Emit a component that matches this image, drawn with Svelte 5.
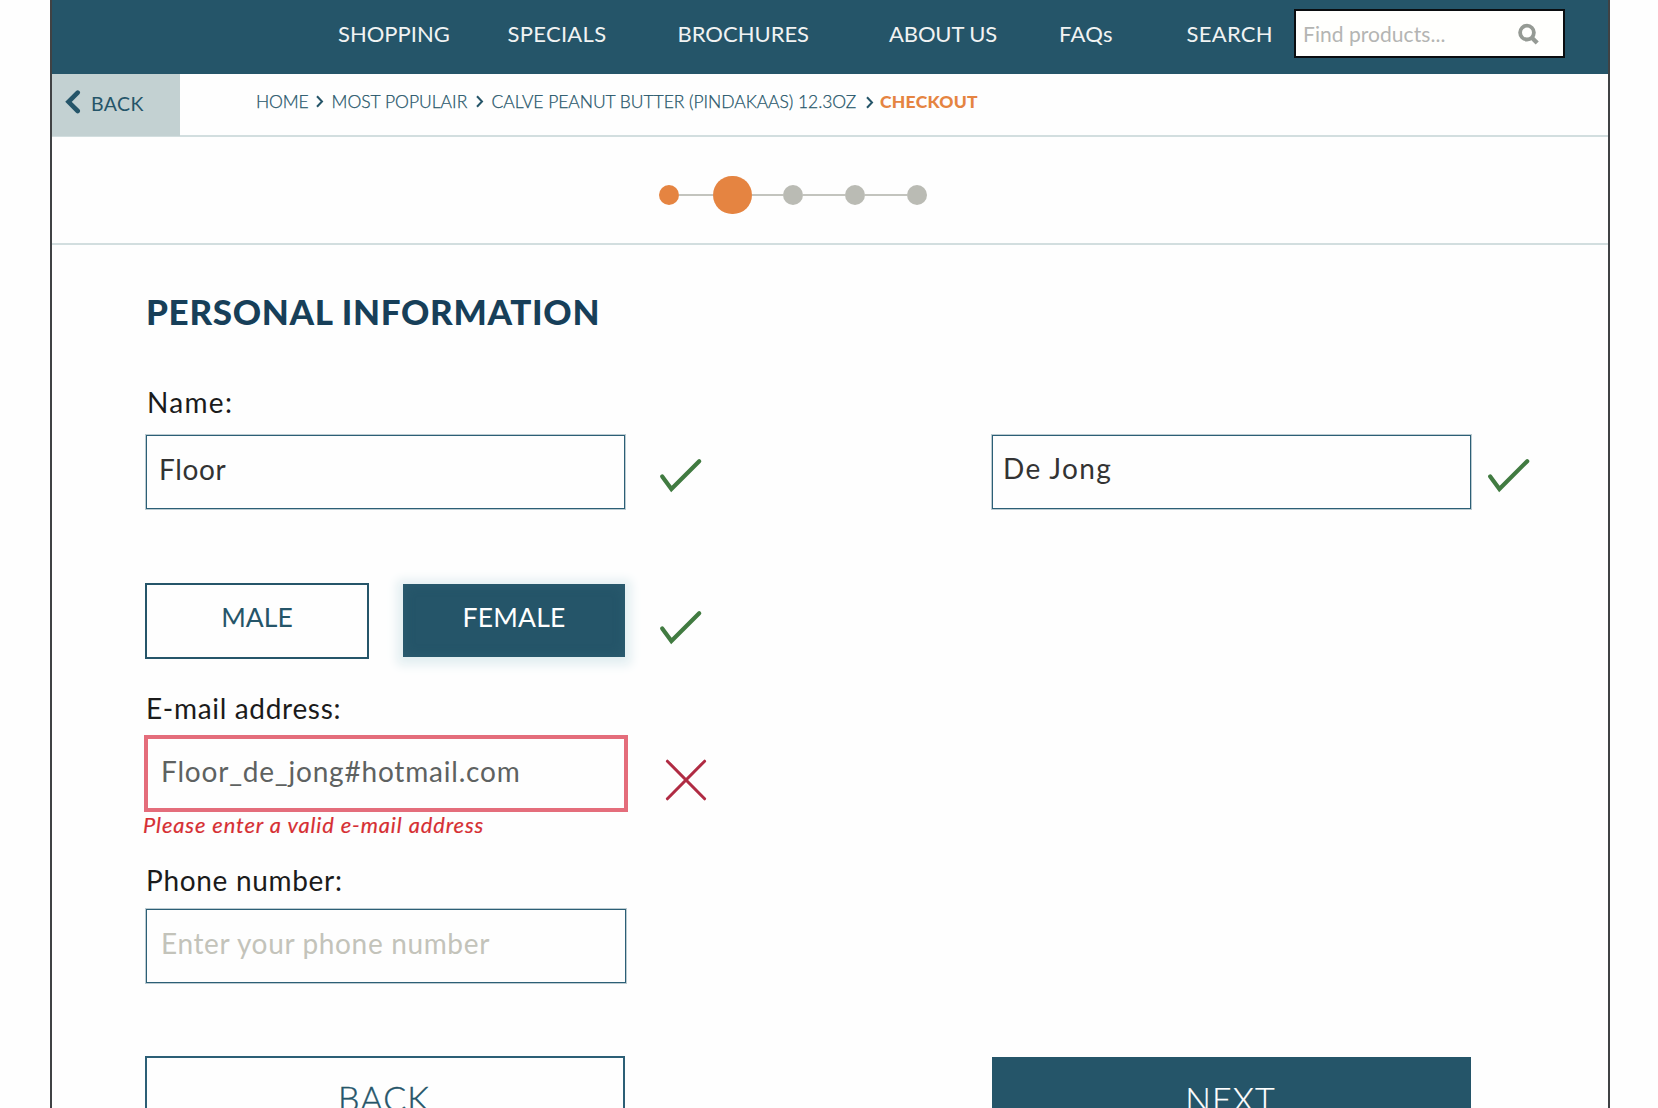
<script>
  const nav = [
    { label: 'SHOPPING', cls: '' },
    { label: 'SPECIALS', cls: 'loose' },
    { label: 'BROCHURES', cls: '' },
    { label: 'ABOUT US', cls: 'tight' },
    { label: 'FAQs', cls: 'loose' },
    { label: 'SEARCH', cls: 'loose' }
  ];
  const steps = ['done', 'current', 'todo', 'todo', 'todo'];
  let first = $state('Floor');
  let last = $state('De Jong');
  let email = $state('Floor_de_jong#hotmail.com');
  let phone = $state('');
</script>

{#snippet check()}
  <svg class="check" width="44" height="36" viewBox="0 0 44 36" aria-hidden="true">
    <path d="M3.2 18.4 L12.4 31 L40.2 3.2" />
  </svg>
{/snippet}

{#snippet arrow()}
  <svg class="arrow" width="9" height="13" viewBox="0 0 9 13" aria-hidden="true">
    <path d="M2 1.3 L7 6.5 L2 11.7" />
  </svg>
{/snippet}

<div class="page">
  <header>
    {#each nav as item}
      <a class={item.cls}>{item.label}</a>
    {/each}
    <div class="search">
      <input placeholder="Find products..." />
      <svg width="24" height="24" viewBox="0 0 24 24" aria-hidden="true">
        <circle cx="10" cy="9.6" r="6.9" />
        <path d="M14.9 14.8 L20.2 20" />
      </svg>
    </div>
  </header>

  <div class="bar">
    <button class="back">
      <svg width="16" height="24" viewBox="0 0 16 24" aria-hidden="true"><path d="M12.7 2.6 L3.5 11.8 L12.7 21" /></svg>
      <span>BACK</span>
    </button>
    <nav class="crumbs">
      <span class="home">HOME</span>
      {@render arrow()}
      <span class="popular">MOST POPULAIR</span>
      {@render arrow()}
      <span class="product">CALVE PEANUT BUTTER (PINDAKAAS) 12.3OZ</span>
      <span class="last">{@render arrow()}</span>
      <strong>CHECKOUT</strong>
    </nav>
  </div>

  <div class="steps">
    {#each steps as step, i}
      {#if i > 0}<i class={i === 1 ? 'first' : i === 2 ? 'second' : ''}></i>{/if}
      <b class={step}></b>
    {/each}
  </div>

  <main>
    <h1>PERSONAL INFORMATION</h1>

    <label class="name" for="first">Name:</label>
    <div class="row names">
      <input id="first" class="field first-name" bind:value={first} />
      {@render check()}
      <input class="field last-name" bind:value={last} />
      {@render check()}
    </div>

    <div class="row gender">
      <button class="male">MALE</button>
      <button class="female">FEMALE</button>
      {@render check()}
    </div>

    <label class="mail-label" for="mail">E-mail address:</label>
    <div class="row mail">
      <input id="mail" class="field invalid" bind:value={email} />
      <svg class="cross" width="44" height="44" viewBox="0 0 44 44" aria-hidden="true">
        <path d="M3.4 3.2 L40.6 40.8 M40.6 3.2 L3.4 40.8" />
      </svg>
    </div>
    <p class="error">Please enter a valid e-mail address</p>

    <label class="phone-label" for="phone">Phone number:</label>
    <div class="row phone">
      <input id="phone" class="field" placeholder="Enter your phone number" bind:value={phone} />
    </div>

    <div class="row actions">
      <button class="prev">BACK</button>
      <button class="next">NEXT</button>
    </div>
  </main>
</div>

<style>
  :global(body) { background: #fefefe; overflow: hidden; }
  * { box-sizing: border-box; }
  .page {
    width: 1560px;
    height: 1108px;
    margin-left: 50px;
    overflow: hidden;
    border-left: 2px solid #404244;
    border-right: 2px solid #404244;
    background: #fefefe;
    font-family: Lato, 'Open Sans', sans-serif;
    color: #1b1b1b;
  }
  svg { fill: none; display: block; flex: none; }
  button, input { font-family: inherit; margin: 0; border-radius: 0; outline: none; }
  button { border: 0; padding: 0; }

  header {
    display: grid;
    grid-template-columns: 169.5px 170px 211.5px 170px 127.5px 107.5px 271px;
    align-items: center;
    height: 74px;
    padding: 0 0 8px 286px;
    background: #255569;
    color: #f1f3f3;
    font-size: 22px;
    white-space: nowrap;
  }
  header a { line-height: 26px; padding-top: 2px; }
  .loose { letter-spacing: 0.3px; }
  .tight { letter-spacing: -0.12px; }
  .search {
    display: flex;
    align-items: center;
    width: 271px;
    height: 49px;
    border: 2px solid #0a0d10;
    background: #fffffd;
  }
  .search input {
    flex: 1;
    min-width: 0;
    height: 40px;
    padding: 1px 0 0 7px;
    border: 0;
    background: none;
    font-size: 21px;
    letter-spacing: 0.05px;
  }
  .search input::placeholder { color: #b4b5b3; opacity: 1; }
  .search svg { margin: 4px 22px 0 0; stroke: #959a94; stroke-width: 3.8; }
  .search path { stroke-width: 4.4; }

  .bar { display: flex; height: 63px; border-bottom: 2px solid #d2dedf; }
  .back {
    display: flex;
    align-items: center;
    width: 128px;
    height: 62px;
    padding: 0 0 6px 13px;
    background: #c3d1d2;
    color: #255569;
    font-size: 19.5px;
    letter-spacing: 0.4px;
  }
  .back svg { stroke: #255569; stroke-width: 4.6; stroke-linecap: round; stroke-linejoin: miter; }
  .back span { margin: 3px 0 0 10px; line-height: 24px; }

  .crumbs {
    display: flex;
    align-items: center;
    height: 54px;
    padding-left: 76px;
    color: #255569;
    font-size: 17.5px;
    font-weight: 300;
    white-space: nowrap;
    -webkit-text-stroke: 0.25px #255569;
  }
  .home { width: 59px; letter-spacing: -0.15px; }
  .popular { width: 135px; margin-left: 7.5px; }
  .product { width: 366px; margin-left: 8px; letter-spacing: -0.05px; }
  .arrow { stroke: #255569; stroke-width: 2; }
  .popular + .arrow { margin-left: 8px; }
  .last { margin: 3px 0 0 7.5px; }
  .crumbs strong {
    margin-left: 6px;
    color: #e58441;
    font-weight: 900;
    letter-spacing: 0.26px;
    -webkit-text-stroke: 0;
  }

  .steps {
    display: flex;
    align-items: center;
    height: 108px;
    padding: 10px 0 0 606.6px;
    border-bottom: 2px solid #d2dedf;
  }
  .steps b { width: 20.4px; height: 20.4px; border-radius: 50%; background: #babbb4; }
  .steps .done { background: #e58441; }
  .steps .current { width: 38.4px; height: 38.4px; background: #e58441; }
  .steps i { width: 41.7px; height: 2px; background: #c3c4be; }
  .steps .first { width: 34.4px; }
  .steps .second { width: 31px; }

  main { padding: 45px 0 0 93px; }
  h1 {
    margin: 0;
    padding-left: 1px;
    color: #173f59;
    font-size: 35px;
    font-weight: 900;
    line-height: 42px;
    letter-spacing: 0.68px;
  }
  label { display: block; height: 34px; padding-left: 1px; font-size: 28px; line-height: 34px; letter-spacing: 0.68px; }
  .name { margin-top: 53px; padding-left: 2px; letter-spacing: 1.3px; }
  .row { display: flex; }
  .field {
    width: 479px;
    height: 74px;
    padding: 0 12px 7px 12px;
    border: 1px solid #2c5f76;
    box-shadow: 0 0 0 1px rgba(37, 85, 105, 0.3);
    background: #fefefe;
    color: #333;
    font-size: 28px;
    letter-spacing: 0.65px;
  }
  .check { margin: 0; stroke: #417b41; stroke-width: 4.2; stroke-linecap: round; }
  .names { margin: 16px 0 0 1px; }
  .names .check { margin: 23px 0 0 34px; }
  .last-name { margin-left: 289px; padding: 0 12px 8px 10px; letter-spacing: 1.35px; }
  .names .last-name + .check { margin-left: 16px; }

  .gender { margin-top: 74px; height: 76px; }
  .gender button { font-size: 26.5px; }
  .male { width: 224px; height: 76px; padding: 0 0 9px; border: 2px solid #255569; background: #fefefe; color: #255569; }
  .female {
    width: 222px;
    height: 73px;
    margin: 1px 0 0 34px;
    padding: 0 0 8px;
    background: #255569;
    color: #fff;
    letter-spacing: 0.2px;
    box-shadow: 0 2px 10px 6px #e2eef1, inset 0 0 12px rgba(60, 110, 130, 0.35);
  }
  .gender .check { margin: 27px 0 0 34px; }

  .mail-label { margin-top: 32px; }
  .mail { margin: 10px 0 0 -1px; height: 77px; }
  .invalid {
    width: 484px;
    height: 77px;
    padding: 0 12px 5px 13px;
    border: 4px solid #e46d7b;
    box-shadow: none;
    color: #5e6261;
    letter-spacing: 0.8px;
  }
  .cross { margin: 23px 0 0 35.5px; stroke: #b02b43; stroke-width: 3; stroke-linecap: round; }
  .error {
    margin: 1px 0 0 -2px;
    color: #d62f33;
    font-size: 21.8px;
    font-style: italic;
    line-height: 24px;
    letter-spacing: 0.93px;
    -webkit-text-stroke: 0.2px #d62f33;
  }

  .phone-label { margin-top: 26px; }
  .phone { margin: 12px 0 0 1px; }
  .phone .field { width: 480px; padding-left: 14px; }
  .phone .field::placeholder { color: #c3c3ba; opacity: 1; }

  .actions { margin-top: 73px; }
  .actions button { height: 90px; padding: 0 2px 7px 0; font-size: 34px; font-weight: 300; letter-spacing: 1.1px; }
  .prev { width: 480px; border: 2px solid #2c5f76; background: #fefefe; color: #255569; -webkit-text-stroke: 0.4px #255569; }
  .next { width: 479px; margin: 1px 0 0 367px; background: #255569; color: #fff; -webkit-text-stroke: 0.2px #fff; }
</style>
